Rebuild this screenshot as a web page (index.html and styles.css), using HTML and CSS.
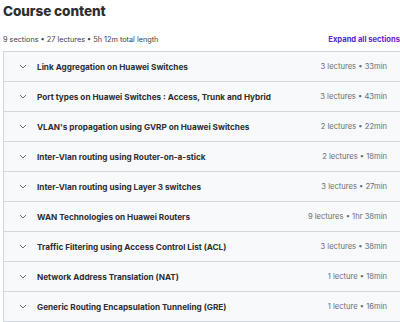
FILE: index.html
```html
<!DOCTYPE html>
<html lang="en">
<head>
  <meta charset="UTF-8">
  <title>Course content</title>
  <link rel="stylesheet" href="styles.css">
</head>
<body>
  <h2 class="title">Course content</h2>
  <div class="summary">
    <span>9 sections • 27 lectures • 5h 12m total length</span>
    <button class="expand">Expand all sections</button>
  </div>

  <div class="sections">
    <div class="section">
      <span class="chev"><svg width="8" height="5" viewBox="0 0 8 5"><path d="M1 1l3 3 3-3" fill="none" stroke="#6a6f73" stroke-width="1"/></svg></span>
      <span class="name">Link Aggregation on Huawei Switches</span>
      <span class="meta">3 lectures • 33min</span>
    </div>
    <div class="section">
      <span class="chev"><svg width="8" height="5" viewBox="0 0 8 5"><path d="M1 1l3 3 3-3" fill="none" stroke="#6a6f73" stroke-width="1"/></svg></span>
      <span class="name">Port types on Huawei Switches : Access, Trunk and Hybrid</span>
      <span class="meta">3 lectures • 43min</span>
    </div>
    <div class="section">
      <span class="chev"><svg width="8" height="5" viewBox="0 0 8 5"><path d="M1 1l3 3 3-3" fill="none" stroke="#6a6f73" stroke-width="1"/></svg></span>
      <span class="name">VLAN's propagation using GVRP on Huawei Switches</span>
      <span class="meta">2 lectures • 22min</span>
    </div>
    <div class="section">
      <span class="chev"><svg width="8" height="5" viewBox="0 0 8 5"><path d="M1 1l3 3 3-3" fill="none" stroke="#6a6f73" stroke-width="1"/></svg></span>
      <span class="name">Inter-Vlan routing using Router-on-a-stick</span>
      <span class="meta">2 lectures • 18min</span>
    </div>
    <div class="section">
      <span class="chev"><svg width="8" height="5" viewBox="0 0 8 5"><path d="M1 1l3 3 3-3" fill="none" stroke="#6a6f73" stroke-width="1"/></svg></span>
      <span class="name">Inter-Vlan routing using Layer 3 switches</span>
      <span class="meta">3 lectures • 27min</span>
    </div>
    <div class="section">
      <span class="chev"><svg width="8" height="5" viewBox="0 0 8 5"><path d="M1 1l3 3 3-3" fill="none" stroke="#6a6f73" stroke-width="1"/></svg></span>
      <span class="name">WAN Technologies on Huawei Routers</span>
      <span class="meta">9 lectures • 1hr 38min</span>
    </div>
    <div class="section">
      <span class="chev"><svg width="8" height="5" viewBox="0 0 8 5"><path d="M1 1l3 3 3-3" fill="none" stroke="#6a6f73" stroke-width="1"/></svg></span>
      <span class="name">Traffic Filtering using Access Control List (ACL)</span>
      <span class="meta">3 lectures • 38min</span>
    </div>
    <div class="section">
      <span class="chev"><svg width="8" height="5" viewBox="0 0 8 5"><path d="M1 1l3 3 3-3" fill="none" stroke="#6a6f73" stroke-width="1"/></svg></span>
      <span class="name">Network Address Translation (NAT)</span>
      <span class="meta">1 lecture • 18min</span>
    </div>
    <div class="section">
      <span class="chev"><svg width="8" height="5" viewBox="0 0 8 5"><path d="M1 1l3 3 3-3" fill="none" stroke="#6a6f73" stroke-width="1"/></svg></span>
      <span class="name">Generic Routing Encapsulation Tunneling (GRE)</span>
      <span class="meta">1 lecture • 16min</span>
    </div>
  </div>
</body>
</html>
```

FILE: styles.css
```css
body { font-family: Inter, "Noto Sans", sans-serif; background: #fff; color: #2d2f31; margin: 0; padding: 0 0 0 3px; }
.title { font-size: 13.6px; font-weight: 800; margin: 0; padding-top: 1px; height: 22px; line-height: 20px; letter-spacing: -0.1px; }
.summary { display: flex; justify-content: space-between; align-items: flex-end; height: 28px; padding-bottom: 7px; box-sizing: border-box; font-size: 7.3px; color: #3e4143; }
.expand { border: none; background: none; padding: 0; margin-right: 0; font-family: inherit; font-size: 7.6px; font-weight: 700; color: #5624d0; }
.sections { border: 1px solid #d1d7dc; border-right: none; }
.section { display: flex; align-items: center; height: 29px; background: #f7f9fa; border-bottom: 1px solid #d1d7dc; padding: 0 13px 0 0; }
.section:last-child { border-bottom: none; }
.chev { width: 33px; display: flex; justify-content: center; padding-left: 4px; box-sizing: border-box; }
.name { flex: 1; font-size: 8.2px; font-weight: 700; color: #2d2f31; }
.meta { font-size: 7.6px; color: #6a6f73; }
```
